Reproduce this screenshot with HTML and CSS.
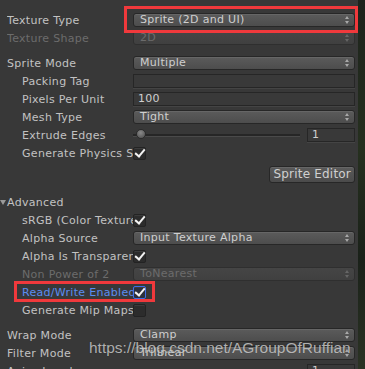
FILE: index.html
```html
<!DOCTYPE html>
<html lang="en">
<head>
  <meta charset="UTF-8" />
  <title>Texture Import Settings</title>
  <link rel="stylesheet" href="styles.css">
</head>
<body>

<div class="window">
  <div class="inspector">

    <!-- Type / shape -->
    <div class="row">
      <div class="label">Texture Type</div>
      <div class="popup">Sprite (2D and UI)<span class="arrows"></span></div>
    </div>
    <div class="row disabled">
      <div class="label">Texture Shape</div>
      <div class="popup">2D<span class="arrows"></span></div>
    </div>

    <!-- Sprite settings -->
    <div class="group">
      <div class="row">
        <div class="label">Sprite Mode</div>
        <div class="popup">Multiple<span class="arrows"></span></div>
      </div>
      <div class="row sub">
        <div class="label">Packing Tag</div>
        <div class="textfield"></div>
      </div>
      <div class="row sub">
        <div class="label">Pixels Per Unit</div>
        <div class="textfield">100</div>
      </div>
      <div class="row sub">
        <div class="label">Mesh Type</div>
        <div class="popup">Tight<span class="arrows"></span></div>
      </div>
      <div class="row sub">
        <div class="label">Extrude Edges</div>
        <div class="slider">
          <div class="track"><span class="thumb"></span></div>
          <div class="textfield num">1</div>
        </div>
      </div>
      <div class="row sub">
        <div class="label">Generate Physics Shape</div>
        <div class="check on"></div>
      </div>
      <div class="button-row">
        <div class="btn">Sprite Editor</div>
      </div>
    </div>

    <!-- Advanced -->
    <div class="row foldout">
      <div class="label"><span class="tri"></span>Advanced</div>
    </div>
    <div class="row sub">
      <div class="label">sRGB (Color Texture)</div>
      <div class="check on"></div>
    </div>
    <div class="row sub">
      <div class="label">Alpha Source</div>
      <div class="popup">Input Texture Alpha<span class="arrows"></span></div>
    </div>
    <div class="row sub">
      <div class="label">Alpha Is Transparency</div>
      <div class="check on"></div>
    </div>
    <div class="row sub disabled">
      <div class="label">Non Power of 2</div>
      <div class="popup">ToNearest<span class="arrows"></span></div>
    </div>
    <div class="row sub focused">
      <div class="label">Read/Write Enabled</div>
      <div class="check on"></div>
    </div>
    <div class="row sub">
      <div class="label">Generate Mip Maps</div>
      <div class="check"></div>
    </div>

    <!-- Wrap / filter -->
    <div class="group">
      <div class="row">
        <div class="label">Wrap Mode</div>
        <div class="popup">Clamp<span class="arrows"></span></div>
      </div>
      <div class="row">
        <div class="label">Filter Mode</div>
        <div class="popup">Trilinear<span class="arrows"></span></div>
      </div>
      <div class="row">
        <div class="label">Aniso Level</div>
        <div class="slider">
          <div class="track"></div>
          <div class="textfield num">1</div>
        </div>
      </div>
    </div>

    <!-- annotations drawn over the screenshot -->
    <div class="mark mark-type"></div>
    <div class="mark mark-rw"></div>
    <div class="watermark">https://blog.csdn.net/AGroupOfRuffian</div>
  </div>
  <div class="edge"></div>
</div>

</body>
</html>
```

FILE: styles.css
```css
body, html {
  margin: 0;
  padding: 0;
  background: #383838;
  font-family: 'DejaVu Sans', sans-serif;
  font-size: 11px;
  letter-spacing: 0.3px;
  color: #c2c2c2;
  overflow: hidden;
}

.window {
  display: flex;
  width: 365px;
  height: 369px;
  overflow: hidden;
}

.inspector {
  position: relative;
  flex: 1;
  padding: 11px 3px 0 7px;
}

.edge {
  width: 7px;
  background: linear-gradient(180deg, #1d231c, #26301f 40%, #1a2119 70%, #2b3324);
}

.row {
  display: flex;
  align-items: center;
  height: 18px;
}

.label {
  width: 126px;
  flex: none;
  white-space: nowrap;
  overflow: hidden;
}

.row.sub .label {
  width: 111px;
  padding-left: 15px;
}

.disabled .label,
.disabled .popup {
  color: #6c6c6c;
}

.focused .label {
  color: #5b8df0;
}

.group {
  margin-top: 7px;
}

/* popups */
.popup {
  position: relative;
  flex: 1;
  height: 12px;
  line-height: 12px;
  padding: 0 6px;
  border: 1px solid #272727;
  border-radius: 3px;
  background: linear-gradient(180deg, #5b5b5b, #4d4d4d);
  box-shadow: inset 0 1px 0 #666;
  color: #cfcfcf;
  white-space: nowrap;
}

.disabled .popup {
  background: linear-gradient(180deg, #454545, #404040);
  box-shadow: none;
  border-color: #2f2f2f;
}

.arrows {
  position: absolute;
  right: 4px;
  top: 2px;
  width: 5px;
  height: 8px;
}

.arrows::before,
.arrows::after {
  content: "";
  position: absolute;
  left: 0;
  border-left: 2.5px solid transparent;
  border-right: 2.5px solid transparent;
}

.arrows::before {
  top: 0;
  border-bottom: 3px solid #a8a8a8;
}

.arrows::after {
  bottom: 0;
  border-top: 3px solid #a8a8a8;
}

.disabled .arrows::before { border-bottom-color: #666; }
.disabled .arrows::after { border-top-color: #666; }

/* text fields */
.textfield {
  flex: 1;
  height: 12px;
  line-height: 12px;
  padding: 0 4px;
  border: 1px solid #262626;
  background: #393939;
  box-shadow: 0 1px 0 #444;
  color: #cfcfcf;
}

.slider {
  flex: 1;
  display: flex;
  align-items: center;
}

.track {
  position: relative;
  flex: 1;
  height: 2px;
  margin-right: 7px;
  background: #262626;
  border-bottom: 1px solid #4a4a4a;
}

.thumb {
  position: absolute;
  left: 3px;
  top: -5px;
  width: 10px;
  height: 10px;
  border-radius: 50%;
  background: radial-gradient(circle at 45% 35%, #8a8a8a, #5c5c5c 70%);
  border: 1px solid #2a2a2a;
  box-sizing: border-box;
}

.textfield.num {
  flex: none;
  width: 38px;
}

/* checkboxes */
.check {
  position: relative;
  width: 11px;
  height: 11px;
  border: 1px solid #232323;
  border-radius: 2px;
  background: #2c2c2c;
  box-shadow: inset 0 1px 0 #3c3c3c;
}

.check.on::after {
  content: "";
  position: absolute;
  left: 3px;
  top: -1px;
  width: 4px;
  height: 8px;
  border-right: 2.5px solid #f2f2f2;
  border-bottom: 2.5px solid #f2f2f2;
  transform: rotate(40deg);
}

.focused .check {
  border-color: #3e6ee8;
  background: #2b2f3c;
}

/* button */
.button-row {
  display: flex;
  justify-content: flex-end;
  margin: 4px 0 10px;
}

.btn {
  height: 15px;
  line-height: 15px;
  padding: 0 3px;
  border: 1px solid #272727;
  border-radius: 3px;
  background: linear-gradient(180deg, #5a5a5a, #4b4b4b);
  box-shadow: inset 0 1px 0 #666;
  font-size: 12px;
  letter-spacing: 0.2px;
  color: #d0d0d0;
}

/* foldout */
.foldout .label {
  position: relative;
  overflow: visible;
}

.tri {
  position: absolute;
  left: -7px;
  top: 4px;
  border-left: 3px solid transparent;
  border-right: 3px solid transparent;
  border-top: 5px solid #9a9a9a;
}

/* annotations */
.mark {
  position: absolute;
  border: 3px solid #f0393c;
}

.mark-type {
  left: 124px;
  top: 6px;
  width: 228px;
  height: 21px;
}

.mark-rw {
  left: 14px;
  top: 281px;
  width: 135px;
  height: 15px;
}

.watermark {
  position: absolute;
  left: 89px;
  top: 339px;
  font-family: 'Liberation Sans', Arial, sans-serif;
  font-size: 15.5px;
  letter-spacing: 0;
  color: rgba(230, 230, 230, 0.72);
  text-shadow: 0 0 1px rgba(0, 0, 0, 0.4);
  white-space: nowrap;
}
```
